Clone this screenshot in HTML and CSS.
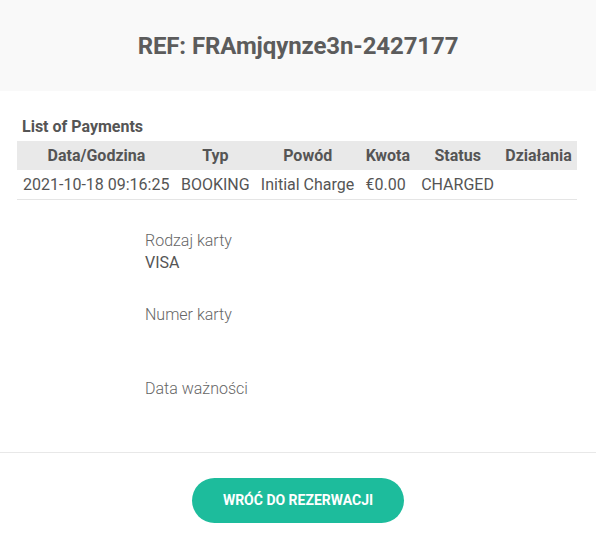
FILE: index.html
```html
<!DOCTYPE html>
<html lang="pl">
<head>
<meta charset="utf-8">
<title>REF</title>
<link rel="stylesheet" href="styles.css">
</head>
<body>
<header class="hero">
  <h1 class="hero-title">REF: FRAmjqynze3n-2427177</h1>
</header>
<main class="content">
  <h3 class="section-title">List of Payments</h3>
  <table class="payments">
    <thead>
      <tr>
        <th>Data/Godzina</th>
        <th>Typ</th>
        <th>Powód</th>
        <th>Kwota</th>
        <th>Status</th>
        <th>Działania</th>
      </tr>
    </thead>
    <tbody>
      <tr>
        <td>2021-10-18 09:16:25</td>
        <td>BOOKING</td>
        <td>Initial Charge</td>
        <td>€0.00</td>
        <td>CHARGED</td>
        <td></td>
      </tr>
    </tbody>
  </table>
  <dl class="card-info">
    <div class="card-field">
      <dt>Rodzaj karty</dt>
      <dd>VISA</dd>
    </div>
    <div class="card-field">
      <dt>Numer karty</dt>
      <dd></dd>
    </div>
    <div class="card-field">
      <dt>Data ważności</dt>
      <dd></dd>
    </div>
  </dl>
</main>
<footer class="actions">
  <a class="btn-back" href="#">WRÓĆ DO REZERWACJI</a>
</footer>
</body>
</html>
```
FILE: styles.css
```css
* { box-sizing: border-box; }
html, body {
  margin: 0;
  padding: 0;
  background: #fff;
  font-family: Roboto, "Liberation Sans", sans-serif;
  color: #555;
}
.hero {
  background: #f9f9f9;
  height: 91px;
  display: flex;
  align-items: center;
  justify-content: center;
}
.hero-title {
  margin: 0;
  font-size: 24px;
  font-weight: 700;
  color: #5c5c5c;
  letter-spacing: -0.1px;
}
.content {
  padding: 25px 19px 0 17px;
}
.section-title {
  margin: 0 0 4px 5px;
  font-size: 16px;
  font-weight: 700;
  color: #555;
  line-height: 21px;
}
.payments {
  width: 100%;
  border-collapse: collapse;
  font-size: 16px;
  color: #555;
  white-space: nowrap;
}
.payments th {
  background: #e9e9e9;
  font-weight: 700;
  text-align: center;
  height: 29px;
  padding: 0 5px 0 6px;
  color: #555;
}
.payments td {
  height: 29px;
  padding: 0 5px 0 6px;
  text-align: left;
  border-bottom: 1px solid #e5e5e5;
  font-weight: 400;
}
.card-info {
  margin: 30px 0 0 128px;
  padding: 0;
}
.card-field {
  height: 74px;
}
.card-field dt {
  font-size: 16px;
  font-weight: 300;
  color: #666;
  line-height: 22px;
}
.card-field dd {
  margin: 0;
  font-size: 16px;
  color: #555;
  line-height: 22px;
}
.actions {
  margin-top: 0;
  border-top: 1px solid #e8e8e8;
  padding-top: 25px;
  display: flex;
  justify-content: center;
}
.btn-back {
  display: flex;
  align-items: center;
  justify-content: center;
  width: 212px;
  height: 45px;
  border-radius: 23px;
  background: #1dbc9c;
  color: #fff;
  font-size: 14px;
  font-weight: 700;
  text-decoration: none;
}
```
